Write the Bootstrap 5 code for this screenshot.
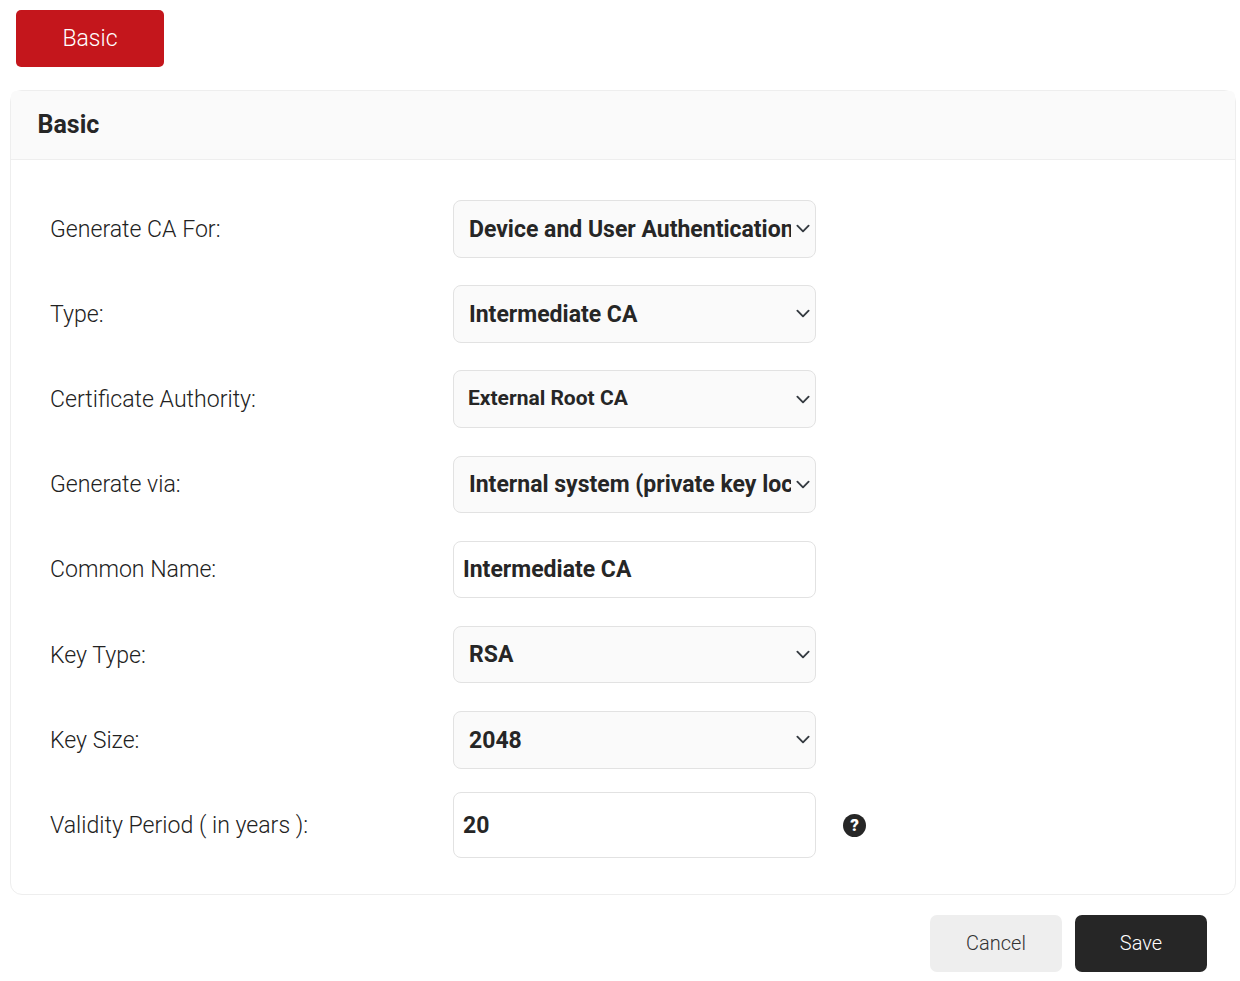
<!DOCTYPE html>
<html lang="en">
<head>
  <meta charset="UTF-8">
  <meta name="viewport" content="width=device-width, initial-scale=1.0">
  <title>Generate CA</title>
  <link href="https://cdn.jsdelivr.net/npm/bootstrap@5.3.0/dist/css/bootstrap.min.css" rel="stylesheet">
  <style>
    body { font-family: Roboto, "Liberation Sans", sans-serif; color: #262626; padding: 10px 10px 0; }
    .tab-red { width: 148px; height: 57px; margin-left: 6px; padding-top: 8px; background: #c4161c; border: 0; color: #fff; font-size: 23px; font-weight: 300; border-radius: 5px; }
    .panel { margin-top: 23px; width: 1226px; border-color: #eee; border-radius: 12px; }
    .panel .card-header { height: 69px; padding: 0 26.5px; background: #fafafa; border-color: #eee; font-size: 25px; font-weight: 700; line-height: 68px; }
    .panel .card-body { padding: 40px 0 36px 39px; }
    .field-row { height: 57.5px; margin-bottom: 27.7px; }
    .field-row.last { height: 66px; margin-top: -4.5px; margin-bottom: 0; }
    .field-label { width: 403px; padding-top: 2.5px; font-size: 23.1px; font-weight: 300; color: #222; }
    .field-ctl { width: 363px; height: 100%; border: 1px solid #e2e2e2; border-radius: 8px; font-size: 23px; font-weight: 700; color: #262626; }
    select.field-ctl { padding: 2px 24px 0 15px; background-color: #fafafa; background-position: right 2.5px center; background-size: 20px 15px; }
    select.field-ctl.small-val { font-size: 21px; padding: 0 24px 0 14px; }
    input.field-ctl { padding: 0 9px; }
    .last .field-label { padding-top: 4px; }
    .last input.field-ctl { padding-top: 2px; }
    .help-dot { width: 23px; height: 23px; margin: 1px 0 0 27px; background: #262626; color: #fff; border-radius: 50%; font-size: 17px; font-weight: 900; line-height: 1; }
    .btn-cancel, .btn-save { width: 132px; height: 57px; padding-top: 6px; font-size: 20px; font-weight: 300; border: 0; border-radius: 7px; }
    .btn-cancel { background: #eee; color: #333; }
    .btn-save { background: #262626; color: #fff; }
    .foot { margin-top: 20px; padding-right: 23px; gap: 13px; }
  </style>
</head>
<body>
  <button type="button" class="btn tab-red">Basic</button>

  <div class="card panel">
    <div class="card-header">Basic</div>
    <div class="card-body">
      <div class="d-flex align-items-center field-row">
        <label class="field-label">Generate CA For:</label>
        <select class="form-select field-ctl"><option>Device and User Authentication</option></select>
      </div>
      <div class="d-flex align-items-center field-row">
        <label class="field-label">Type:</label>
        <select class="form-select field-ctl"><option>Intermediate CA</option></select>
      </div>
      <div class="d-flex align-items-center field-row">
        <label class="field-label">Certificate Authority:</label>
        <select class="form-select field-ctl small-val"><option>External Root CA</option></select>
      </div>
      <div class="d-flex align-items-center field-row">
        <label class="field-label">Generate via:</label>
        <select class="form-select field-ctl"><option>Internal system (private key located here)</option></select>
      </div>
      <div class="d-flex align-items-center field-row">
        <label class="field-label">Common Name:</label>
        <input type="text" class="form-control field-ctl" value="Intermediate CA">
      </div>
      <div class="d-flex align-items-center field-row">
        <label class="field-label">Key Type:</label>
        <select class="form-select field-ctl"><option>RSA</option></select>
      </div>
      <div class="d-flex align-items-center field-row">
        <label class="field-label">Key Size:</label>
        <select class="form-select field-ctl"><option>2048</option></select>
      </div>
      <div class="d-flex align-items-center field-row last">
        <label class="field-label">Validity Period ( in years ):</label>
        <input type="text" class="form-control field-ctl" value="20">
        <span class="help-dot d-inline-flex align-items-center justify-content-center">?</span>
      </div>
    </div>
  </div>

  <div class="d-flex justify-content-end foot">
    <button type="button" class="btn btn-cancel">Cancel</button>
    <button type="button" class="btn btn-save">Save</button>
  </div>

  <script src="https://cdn.jsdelivr.net/npm/bootstrap@5.3.0/dist/js/bootstrap.bundle.min.js"></script>
</body>
</html>
